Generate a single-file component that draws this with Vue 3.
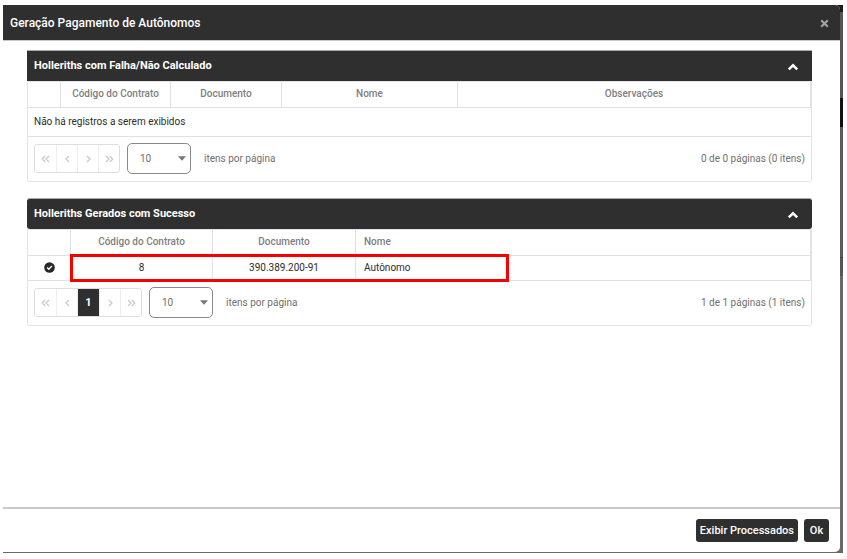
<script setup>
import { reactive } from 'vue'

const panels = reactive([
  {
    id: 'falha',
    title: 'Holleriths com Falha/Não Calculado',
    open: true,
    rounded: false,
    columns: [
      { label: '', width: 33 },
      { label: 'Código do Contrato', width: 110 },
      { label: 'Documento', width: 111 },
      { label: 'Nome', width: 176 },
      { label: 'Observações' },
    ],
    rows: [],
    pages: [],
    size: '10',
    summary: '0 de 0 páginas (0 itens)',
  },
  {
    id: 'sucesso',
    title: 'Holleriths Gerados com Sucesso',
    open: true,
    rounded: true,
    columns: [
      { label: '', width: 43 },
      { label: 'Código do Contrato', width: 142 },
      { label: 'Documento', width: 143 },
      { label: 'Nome', left: true },
    ],
    rows: [['8', '390.389.200-91', 'Autônomo']],
    pages: [1],
    size: '10',
    summary: '1 de 1 páginas (1 itens)',
  },
])
</script>

<template>
  <div class="backdrop">
    <section class="dialog" role="dialog" aria-labelledby="dialog-title">
      <header class="dialog-head">
        <h1 id="dialog-title">Geração Pagamento de Autônomos</h1>
        <button type="button" class="icon-btn close" aria-label="Fechar">
          <svg width="9" height="9" viewBox="0 0 9 9"><path d="M1.2 1.2 7.8 7.8M7.8 1.2 1.2 7.8" stroke="#a2a2a2" stroke-width="2.2" /></svg>
        </button>
      </header>

      <main class="dialog-body">
        <section v-for="p in panels" :key="p.id" class="panel">
          <div class="panel-head" :class="{ rounded: p.rounded }">
            <h2>{{ p.title }}</h2>
            <button type="button" class="icon-btn" aria-label="Recolher" @click="p.open = !p.open">
              <svg width="12" height="8" viewBox="0 0 12 8"><path d="M1.8 6.3 6 2.3l4.2 4" fill="none" stroke="#fff" stroke-width="2.5" /></svg>
            </button>
          </div>
          <div v-if="p.open" class="panel-body">
            <div class="grid">
              <table>
                <colgroup>
                  <col v-for="(c, i) in p.columns" :key="i" :style="c.width ? { width: c.width + 'px' } : null" />
                </colgroup>
                <thead>
                  <tr>
                    <th v-for="(c, i) in p.columns" :key="i" :class="{ left: c.left }">{{ c.label }}</th>
                  </tr>
                </thead>
                <tbody>
                  <tr v-for="(r, i) in p.rows" :key="i">
                    <td>
                      <svg class="check" width="11" height="11" viewBox="0 0 11 11"><circle cx="5.5" cy="5.5" r="5.3" fill="#23262b" /><path d="m3.1 5.6 1.7 1.7 3.1-3.2" fill="none" stroke="#fff" stroke-width="1.4" /></svg>
                    </td>
                    <td v-for="(v, j) in r" :key="j" :class="{ left: p.columns[j + 1].left }">{{ v }}</td>
                  </tr>
                  <tr v-if="!p.rows.length" class="empty">
                    <td :colspan="p.columns.length">Não há registros a serem exibidos</td>
                  </tr>
                </tbody>
              </table>
              <div v-if="p.rows.length" class="marker"></div>
            </div>
            <div class="pager">
              <nav class="pages" aria-label="Paginação">
                <button type="button" aria-label="Primeira">
                  <svg width="9" height="8" viewBox="0 0 9 8"><path d="M4.2 1 1.2 4l3 3M8 1 5 4l3 3" /></svg>
                </button>
                <button type="button" aria-label="Anterior">
                  <svg width="5" height="8" viewBox="0 0 5 8"><path d="M4 1 1 4l3 3" /></svg>
                </button>
                <button v-for="n in p.pages" :key="n" type="button" class="current">{{ n }}</button>
                <button type="button" aria-label="Próxima">
                  <svg width="5" height="8" viewBox="0 0 5 8"><path d="m1 1 3 3-3 3" /></svg>
                </button>
                <button type="button" aria-label="Última">
                  <svg width="9" height="8" viewBox="0 0 9 8"><path d="m1 1 3 3-3 3M4.8 1l3 3-3 3" /></svg>
                </button>
              </nav>
              <div class="size">
                <select :id="'size-' + p.id" v-model="p.size">
                  <option>10</option>
                  <option>20</option>
                  <option>50</option>
                </select>
                <svg class="caret" width="8" height="5" viewBox="0 0 8 5"><path d="M0 .3h8L4 4.8z" fill="#777" /></svg>
              </div>
              <label :for="'size-' + p.id">itens por página</label>
              <span class="summary">{{ p.summary }}</span>
            </div>
          </div>
        </section>
      </main>

      <footer class="dialog-foot">
        <button type="button">Exibir Processados</button>
        <button type="button">Ok</button>
      </footer>
    </section>
  </div>
</template>

<style>
body {
  margin: 0;
  background: #fff;
}
</style>

<style scoped>
* {
  box-sizing: border-box;
}
.backdrop {
  display: flex;
  min-height: calc(100vh - 11px);
  margin: 5px 4px 6px 3px;
  padding: 0 3px 1px 0;
  font: 10px/14px Roboto, "Liberation Sans", sans-serif;
  background: linear-gradient(#1b1b1b 7px, #555 7px 93px, #111 93px 122px, #5a5a5a 122px 252px, #444 252px 253px, #555 253px 271px, #686868 271px);
}
.dialog {
  display: flex;
  flex: 1;
  flex-direction: column;
  min-width: 0;
  background: #fff;
  border-radius: 0 5px 5px 0;
  overflow: hidden;
}
.dialog-head,
.panel-head {
  display: flex;
  align-items: center;
  justify-content: space-between;
  color: #fff;
  background: #2f2f2f;
}
.dialog-head {
  height: 36px;
  padding: 0 11px 0 7px;
  border-bottom: 1px solid #c8c8c8;
}
h1,
h2 {
  margin: 0;
  line-height: 16px;
}
h1 {
  font-size: 12px;
  font-weight: 500;
}
h2 {
  font-size: 11px;
  font-weight: 700;
}
button {
  font-family: inherit;
  cursor: pointer;
}
.icon-btn {
  display: flex;
  padding: 0;
  border: 0;
  background: none;
}
.close {
  padding-top: 2px;
}
.dialog-body {
  display: flex;
  flex: 1;
  flex-direction: column;
  gap: 16px;
  padding: 9px 28px 16px 24px;
}
.panel-head {
  height: 31px;
  padding: 0 13px 0 7px;
  border-top: 1px solid #a8a8a8;
}
.panel-head .icon-btn {
  padding-top: 2px;
}
.rounded {
  border-radius: 3px;
}
.panel-body {
  border: 1px solid #e2e3e8;
  border-radius: 0 0 3px 3px;
}
.grid {
  position: relative;
}
table {
  width: 100%;
  border-collapse: separate;
  border-spacing: 0;
  table-layout: fixed;
}
th,
td {
  height: 26px;
  padding: 0;
  text-align: center;
  border-right: 1px solid #e0e1e6;
  border-bottom: 1px solid #e0e1e6;
}
th {
  padding-bottom: 1px;
  color: #808080;
  font-weight: 500;
}
td {
  height: 25px;
  padding-bottom: 1px;
  color: #2c2c2c;
}
th.left,
td.left {
  padding-left: 8px;
  text-align: left;
}
.empty td {
  height: 29px;
  padding-left: 6px;
  text-align: left;
  border-right: 0;
}
.check {
  display: block;
  margin: 0 auto;
}
.marker {
  position: absolute;
  top: 24px;
  left: 42px;
  width: 439px;
  height: 28px;
  border: 3px solid #f80000;
}
.pager {
  display: flex;
  align-items: center;
  height: 44px;
  padding: 0 6px 1px;
  color: #707070;
}
.pages {
  display: flex;
  height: 29px;
  border: 1px solid #dedede;
  border-radius: 3px;
}
.pages button {
  display: flex;
  align-items: center;
  justify-content: center;
  width: 21px;
  padding: 0;
  border: 0;
  background: none;
}
.pages button + button {
  border-left: 1px solid #ededed;
}
.pages svg {
  fill: none;
  stroke: #c8c8c8;
  stroke-width: 1.2;
}
.pages .current {
  width: 22px;
  color: #fff;
  font-size: 11px;
  font-weight: 700;
  background: #2f2f2f;
}
.size {
  position: relative;
  margin: 0 13px 0 7px;
}
select {
  display: block;
  width: 64px;
  height: 31px;
  padding: 0 12px;
  color: #707070;
  font: inherit;
  background: #fff;
  border: 1px solid #8a8a8a;
  border-radius: 5px;
  appearance: none;
}
.caret {
  position: absolute;
  top: 13px;
  right: 5px;
  pointer-events: none;
}
.summary {
  margin-left: auto;
}
.dialog-foot {
  display: flex;
  justify-content: flex-end;
  gap: 6px;
  padding: 10px 11px;
  border-top: 2px solid #c9c9c9;
}
.dialog-foot button {
  min-width: 25px;
  height: 23px;
  padding: 0 4px;
  color: #fff;
  font-size: 11px;
  font-weight: 500;
  background: #2f2f2f;
  border: 0;
  border-radius: 3px;
}
</style>
